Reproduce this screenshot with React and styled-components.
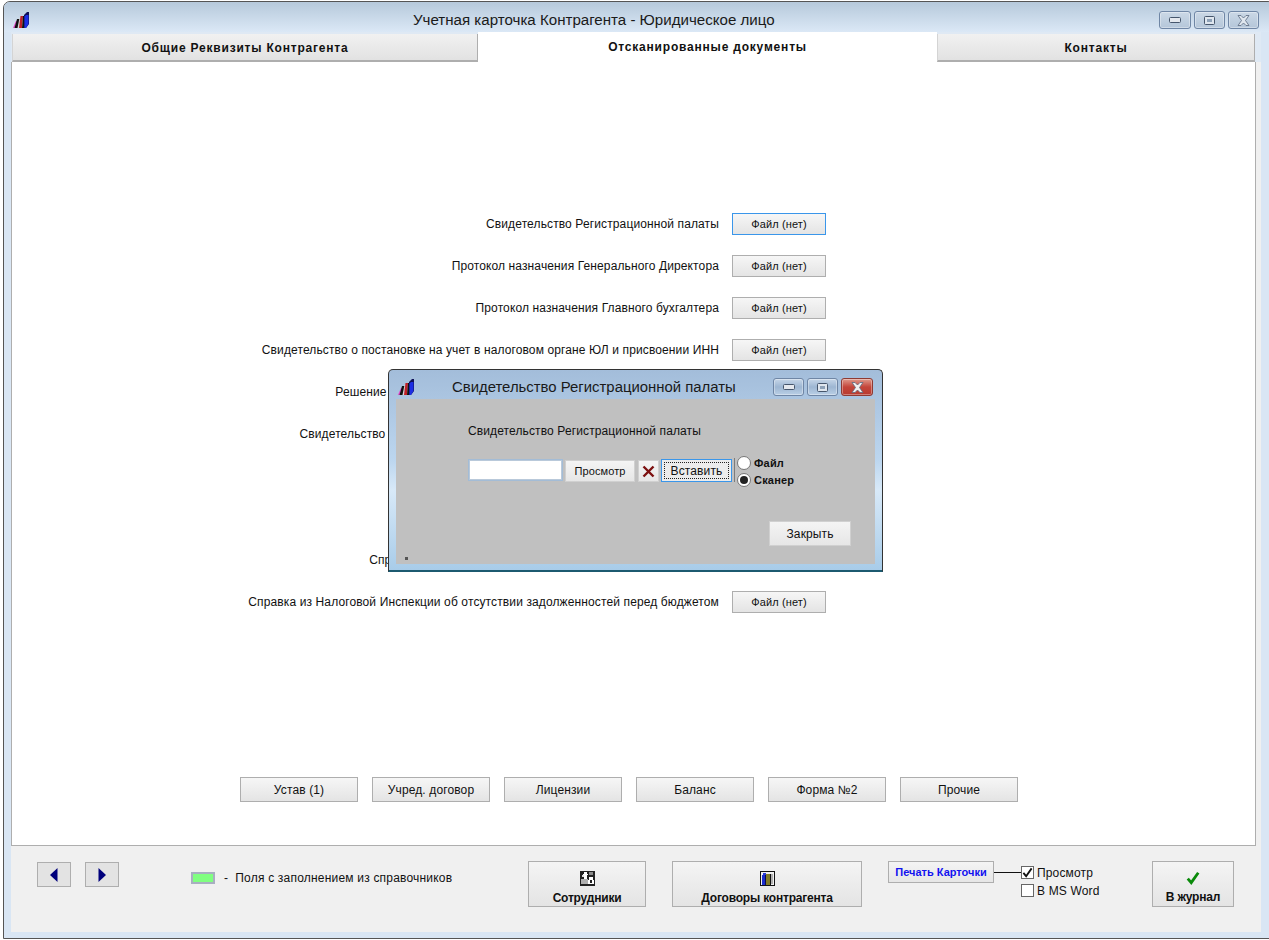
import React from "react";
import styled, { createGlobalStyle } from "styled-components";

const GlobalStyle = createGlobalStyle`
  html, body {
    margin: 0;
    padding: 0;
    background: #fff;
    font-family: "Liberation Sans", Arial, sans-serif;
    color: #111;
  }
`;

const rows = [
  "Свидетельство Регистрационной палаты",
  "Протокол назначения Генерального Директора",
  "Протокол назначения Главного бухгалтера",
  "Свидетельство о постановке на учет в налоговом органе ЮЛ и присвоении ИНН",
  "Решение о создании юридического лица и о назначении директора",
  "Свидетельство о внесении записи в Единый государственный реестр ЮЛ",
  "Выписка из Единого государственного реестра",
  "Информационное письмо органов статистики",
  "Справка из банка об открытии расчетного счета, об оборотах",
  "Справка из Налоговой Инспекции об отсутствии задолженностей перед бюджетом",
];

const extraDocs = ["Устав (1)", "Учред. договор", "Лицензии", "Баланс", "Форма №2", "Прочие"];

const Screen = styled.div`
  position: relative;
  width: 1269px;
  height: 940px;
  overflow: hidden;
  padding: 1px 0 0 3px;
  box-sizing: border-box;
`;

const Win = styled.div`
  width: 1272px;
  height: 938px;
  box-sizing: border-box;
  display: flex;
  flex-direction: column;
  border: 1px solid #555;
  border-radius: 7px 7px 0 0;
  background: #d9e6f4;
`;

const TitleBar = styled.div`
  height: ${(p) => p.$h}px;
  flex: none;
  display: flex;
  align-items: center;
  box-sizing: border-box;
  padding: ${(p) => p.$pad};
  border-radius: 6px 6px 0 0;
  background: ${(p) => p.$bg};
`;

const TitleText = styled.div`
  flex: none;
  margin-left: ${(p) => p.$left}px;
  font-size: ${(p) => p.$size}px;
  line-height: 18px;
  color: #1a1a1a;
  white-space: nowrap;
`;

const Controls = styled.div`
  margin-left: auto;
  display: flex;
  gap: 3px;
`;

const Ctl = styled.div`
  width: ${(p) => p.$w}px;
  height: 18px;
  box-sizing: border-box;
  display: flex;
  align-items: center;
  justify-content: center;
  border: 1px solid ${(p) => (p.$close ? "#8e3a33" : "#6f86a5")};
  border-radius: 3px;
  box-shadow: inset 0 0 0 1px rgba(255, 255, 255, 0.35);
  background: ${(p) => p.$bg};
`;

const Client = styled.div`
  flex: 1;
  min-height: 0;
  margin: 0 13px 6px 7px;
  display: flex;
  flex-direction: column;
  background: #f0f0f0;
`;

const Tabs = styled.div`
  height: 30px;
  flex: none;
  display: flex;
  align-items: flex-end;
  padding-left: 1px;
  padding-right: 5px;
  background: #dfe9f4;
`;

const Tab = styled.div`
  width: ${(p) => p.$w}px;
  height: ${(p) => (p.$active ? 30 : 28)}px;
  box-sizing: border-box;
  display: flex;
  align-items: center;
  justify-content: center;
  padding: ${(p) => (p.$active ? "0 0 1px" : "2px 0 0")};
  font-size: 12px;
  font-weight: bold;
  letter-spacing: 0.8px;
  color: #111;
  background: ${(p) => (p.$active ? "#fff" : "linear-gradient(#f1f1f1, #e2e2e2)")};
  border-bottom: ${(p) => (p.$active ? "none" : "2px solid #aeaeae")};
  border-right: ${(p) => (p.$active ? "none" : "1px solid #aeaeae")};
  border-left: ${(p) => (p.$active ? "none" : "1px solid #d4d4d4")};
`;

const Page = styled.div`
  flex: 1;
  min-height: 0;
  margin: 0 5px 0 0;
  display: flex;
  flex-direction: column;
  background: #fff;
  border: 1px solid #aeaeae;
  border-top: none;
`;

const DocList = styled.div`
  display: flex;
  flex-direction: column;
  gap: 20px;
  padding: 151px 429px 0 0;
`;

const DocRow = styled.div`
  display: flex;
  justify-content: flex-end;
  align-items: center;
  gap: 13px;
  height: 22px;
  font-size: 12px;
  letter-spacing: 0.12px;
`;

const FlatButton = styled.button`
  width: ${(p) => p.$w}px;
  height: ${(p) => p.$h}px;
  flex: none;
  box-sizing: border-box;
  padding: 0;
  font-family: inherit;
  font-size: ${(p) => p.$size || 12}px;
  letter-spacing: 0.12px;
  color: #111;
  border: ${(p) => (p.$focus ? "1px solid #3a96ea" : "1px solid #aeaeae")};
  background: linear-gradient(#f6f6f6, #e4e4e4);
`;

const ExtraRow = styled.div`
  margin-top: auto;
  display: flex;
  gap: 14px;
  padding: 0 0 43px 228px;
`;

const Footer = styled.div`
  height: 86px;
  flex: none;
  display: flex;
  align-items: flex-start;
  padding: 15px 0 0 26px;
  box-sizing: border-box;
`;

const ArrowButton = styled.div`
  width: 34px;
  height: 25px;
  margin: 1px 14px 0 0;
  box-sizing: border-box;
  display: flex;
  align-items: center;
  justify-content: center;
  border: 1px solid #aeaeae;
  background: #e3e3e3;
`;

const Legend = styled.div`
  display: flex;
  align-items: center;
  width: 337px;
  height: 12px;
  margin: 11px 0 0 58px;
  font-size: 12px;
  letter-spacing: 0.2px;
  white-space: pre;
`;

const Swatch = styled.span`
  width: 24px;
  height: 12px;
  box-sizing: border-box;
  margin-right: 9px;
  border: 2px solid #a8afc0;
  background: #80ff80;
`;

const BigButton = styled.div`
  width: ${(p) => p.$w}px;
  height: 46px;
  flex: none;
  margin-right: ${(p) => p.$right}px;
  box-sizing: border-box;
  display: flex;
  flex-direction: column;
  align-items: center;
  padding-top: 9px;
  font-size: 12px;
  font-weight: bold;
  letter-spacing: -0.2px;
  line-height: 14px;
  gap: 5px;
  border: 1px solid #aeaeae;
  background: linear-gradient(#f4f4f4, #e4e4e4);
`;

const PrintButton = styled.div`
  width: 106px;
  height: 22px;
  flex: none;
  box-sizing: border-box;
  display: flex;
  align-items: center;
  justify-content: center;
  font-size: 11px;
  font-weight: bold;
  color: #1212f0;
  border: 1px solid #aeaeae;
  background: linear-gradient(#f4f4f4, #e6e6e6);
`;

const Connector = styled.div`
  width: 27px;
  height: 1px;
  margin-top: 11px;
  flex: none;
  background: #111;
`;

const PrintOptions = styled.div`
  width: 131px;
  flex: none;
  display: flex;
  flex-direction: column;
  gap: 5px;
  padding-top: 5px;
`;

const CheckRow = styled.div`
  display: flex;
  align-items: center;
  gap: 3px;
  height: 13px;
  font-size: 12px;
  letter-spacing: 0.15px;
  white-space: nowrap;
`;

const CheckBox = styled.span`
  width: 13px;
  height: 13px;
  flex: none;
  box-sizing: border-box;
  display: flex;
  align-items: center;
  justify-content: center;
  border: 1px solid #666;
  background: #fff;
`;

const Modal = styled.div`
  position: absolute;
  left: 388px;
  top: 369px;
  width: 495px;
  height: 203px;
  box-sizing: border-box;
  display: flex;
  flex-direction: column;
  border: 1px solid #333;
  border-bottom: 2px solid #1c5a70;
  border-radius: 5px 5px 0 0;
  background: linear-gradient(#a3bdda, #bcd6ef 45%, #d8e9f8 60%, #a8cce9);
`;

const ModalBody = styled.div`
  flex: 1;
  min-height: 0;
  margin: 0 7px 6px 7px;
  display: flex;
  flex-direction: column;
  box-sizing: border-box;
  padding: 25px 24px 0 9px;
  background: #c0c0c0;
  font-size: 12px;
  letter-spacing: 0.12px;
`;

const ModalCaption = styled.div`
  margin-left: 63px;
  line-height: 14px;
`;

const ModalForm = styled.div`
  display: flex;
  align-items: flex-start;
  margin: 20px 0 0 63px;
  height: 31px;
`;

const PathInput = styled.input`
  width: 95px;
  height: 22px;
  box-sizing: border-box;
  margin: 1px 2px 0 0;
  border: 1px solid #a3bcd6;
  outline: 1px solid #b9c9da;
  outline-offset: -2px;
  background: #fff;
`;

const ModalButton = styled.div`
  width: ${(p) => p.$w}px;
  height: ${(p) => p.$h || 22}px;
  margin: ${(p) => p.$m || "2px 3px 0 0"};
  flex: none;
  box-sizing: border-box;
  display: flex;
  align-items: center;
  justify-content: center;
  font-size: ${(p) => p.$size}px;
  color: #111;
  border: 1px solid #d0d0d0;
  background: linear-gradient(#f4f4f4, #e6e6e6);
`;

const InsertButton = styled.div`
  width: 71px;
  height: 23px;
  margin: 1px 2px 0 0;
  flex: none;
  box-sizing: border-box;
  padding: 2px;
  border: 1px solid #3a96ea;
  background: #ececec;
`;

const InsertLabel = styled.div`
  height: 100%;
  box-sizing: border-box;
  display: flex;
  align-items: center;
  justify-content: center;
  border: 1px dotted #222;
  font-size: 12px;
`;

const Divider = styled.div`
  width: 1px;
  height: 24px;
  flex: none;
  margin-right: 2px;
  background: #7c7c7c;
`;

const RadioGroup = styled.div`
  display: flex;
  flex-direction: column;
  gap: 3px;
  margin-top: -2px;
`;

const RadioRow = styled.div`
  display: flex;
  align-items: center;
  gap: 3px;
  height: 14px;
  font-size: 11px;
  font-weight: bold;
  letter-spacing: 0.2px;
`;

const Radio = styled.span`
  width: 14px;
  height: 14px;
  box-sizing: border-box;
  flex: none;
  display: flex;
  align-items: center;
  justify-content: center;
  border: 1px solid #777;
  border-radius: 50%;
  background: #fff;
  &::after {
    content: "";
    display: ${(p) => (p.$on ? "block" : "none")};
    width: 8px;
    height: 8px;
    border-radius: 50%;
    background: #222;
  }
`;

const ModalBottom = styled.div`
  margin-top: auto;
  display: flex;
  align-items: flex-end;
  justify-content: space-between;
  padding-bottom: 4px;
`;

const Dot = styled.span`
  width: 3px;
  height: 3px;
  background: #555;
`;

const BooksIcon = () => (
  <svg width="16" height="16" viewBox="0 0 16 16" style={{ flex: "none" }}>
    <path d="M0 16 L3 9 H4 L1.5 16Z" fill="#e83cc8" />
    <path d="M1.5 16 L4 7 H7 L5 16Z" fill="#111" />
    <path d="M4.5 16 L6.5 6 H7.5 L6 16Z" fill="#d8d8d8" />
    <path d="M6 16 L7.5 4 H10 L9 16Z" fill="#c02028" />
    <path d="M9 16 L10 4 H11 V16Z" fill="#111" />
    <path d="M11 16 V3 L14 0 H16 V12 L13 16Z" fill="#101058" />
    <path d="M11.5 16 V4.5 L13 3 H15.5 V12 L13 16Z" fill="#1c2ee4" />
  </svg>
);

const MinGlyph = () => (
  <svg width="12" height="6" viewBox="0 0 12 6">
    <rect x="0.5" y="0.5" width="11" height="5" rx="1" fill="#e4e8ee" stroke="#46566c" />
  </svg>
);

const MaxGlyph = () => (
  <svg width="11" height="9" viewBox="0 0 11 9">
    <rect x="0.5" y="0.5" width="10" height="8" rx="1" fill="#dfe6ee" stroke="#46566c" />
    <rect x="3" y="3" width="5" height="3" fill="#8ea2b8" />
  </svg>
);

const CloseGlyph = ({ fill }) => (
  <svg width="15" height="11" viewBox="0 0 15 11">
    <path
      d="M2 0.5 H5 L7.5 3 L10 0.5 H13 L9.5 5.5 L13 10.5 H10 L7.5 8 L5 10.5 H2 L5.5 5.5Z"
      fill={fill}
      stroke="#5a6a80"
      strokeWidth="0.8"
    />
  </svg>
);

const Triangle = ({ dir }) => (
  <svg width="8" height="14" viewBox="0 0 8 14">
    <path d={dir === "left" ? "M7.5 0 V14 L0 7Z" : "M0.5 0 V14 L8 7Z"} fill="#00007c" />
  </svg>
);

const PeopleIcon = () => (
  <svg width="15" height="15" viewBox="0 0 15 15" shapeRendering="crispEdges" style={{ flex: "none" }}>
    <rect width="15" height="15" fill="#222" />
    <rect x="1" y="8" width="7" height="5" fill="#b0b0b0" />
    <rect x="4" y="1" width="3" height="7" fill="#fff" />
    <rect x="3" y="3" width="5" height="1" fill="#fff" />
    <rect x="2" y="4" width="2" height="2" fill="#e0e0e0" />
    <rect x="9" y="1" width="4" height="3" fill="#8a8a8a" />
    <rect x="9" y="6" width="4" height="3" fill="#fff" />
    <rect x="8" y="9" width="6" height="4" fill="#fff" />
    <rect x="10" y="9" width="2" height="3" fill="#222" />
  </svg>
);

const BinderIcon = () => (
  <svg width="15" height="15" viewBox="0 0 15 15" shapeRendering="crispEdges" style={{ flex: "none" }}>
    <rect width="15" height="15" fill="#111" />
    <rect x="1" y="1" width="13" height="13" fill="#f0f0f0" />
    <rect x="2" y="4" width="3" height="10" fill="#1c2ecc" />
    <rect x="3" y="2" width="3" height="2" fill="#2a3ad8" />
    <rect x="5" y="4" width="1" height="10" fill="#0a0a50" />
    <rect x="6" y="3" width="4" height="11" fill="#827c26" />
    <rect x="10" y="3" width="1" height="11" fill="#111" />
    <rect x="11" y="3" width="2" height="10" fill="#b0b0b0" />
  </svg>
);

const CheckMark = ({ size, color, width }) => (
  <svg width={size} height={size} viewBox="0 0 12 12" style={{ flex: "none" }}>
    <path d="M1.5 6.5 L4.5 10 L10.5 1.5" fill="none" stroke={color} strokeWidth={width} />
  </svg>
);

const App = () => (
  <Screen>
    <GlobalStyle />
    <Win>
      <TitleBar $h={30} $pad="6px 15px 0 9px" $bg="linear-gradient(#b6c9db, #dbe8f6)">
        <BooksIcon />
        <TitleText $left={384} $size={15.1}>Учетная карточка Контрагента - Юридическое лицо</TitleText>
        <Controls>
          <Ctl $w={32} $bg="linear-gradient(#cbd8e6, #b4c6d9)"><MinGlyph /></Ctl>
          <Ctl $w={31} $bg="linear-gradient(#cbd8e6, #b4c6d9)"><MaxGlyph /></Ctl>
          <Ctl $w={31} $bg="linear-gradient(#cbd8e6, #b4c6d9)"><CloseGlyph fill="#dfe6ee" /></Ctl>
        </Controls>
      </TitleBar>
      <Client>
        <Tabs>
          <Tab $w={466}>Общие Реквизиты Контрагента</Tab>
          <Tab $w={459} $active>Отсканированные документы</Tab>
          <Tab $w={318}>Контакты</Tab>
        </Tabs>
        <Page>
          <DocList>
            {rows.map((label, i) => (
              <DocRow key={label}>
                <span>{label}</span>
                <FlatButton $w={94} $h={22} $size={11} $focus={i === 0}>Файл (нет)</FlatButton>
              </DocRow>
            ))}
          </DocList>
          <ExtraRow>
            {extraDocs.map((label) => (
              <FlatButton key={label} $w={118} $h={25}>{label}</FlatButton>
            ))}
          </ExtraRow>
        </Page>
        <Footer>
          <ArrowButton><Triangle dir="left" /></ArrowButton>
          <ArrowButton><Triangle dir="right" /></ArrowButton>
          <Legend>
            <Swatch />
            {"-  Поля с заполнением из справочников"}
          </Legend>
          <BigButton $w={118} $right={26}>
            <PeopleIcon />
            Сотрудники
          </BigButton>
          <BigButton $w={190} $right={26}>
            <BinderIcon />
            Договоры контрагента
          </BigButton>
          <PrintButton>Печать Карточки</PrintButton>
          <Connector />
          <PrintOptions>
            <CheckRow>
              <CheckBox><CheckMark size={11} color="#111" width={2} /></CheckBox>
              Просмотр
            </CheckRow>
            <CheckRow>
              <CheckBox />
              В MS Word
            </CheckRow>
          </PrintOptions>
          <BigButton $w={82} $right={0}>
            <CheckMark size={14} color="#0a8a0a" width={2.4} />
            В журнал
          </BigButton>
        </Footer>
      </Client>
    </Win>

    <Modal>
      <TitleBar $h={29} $pad="5px 9px 0 9px" $bg="transparent">
        <BooksIcon />
        <TitleText $left={38} $size={14.9}>Свидетельство Регистрационной палаты</TitleText>
        <Controls>
          <Ctl $w={31} $bg="linear-gradient(#c6d6e8, #9db6d2 50%, #b9cfe6)"><MinGlyph /></Ctl>
          <Ctl $w={31} $bg="linear-gradient(#c6d6e8, #9db6d2 50%, #b9cfe6)"><MaxGlyph /></Ctl>
          <Ctl $w={32} $close $bg="linear-gradient(#e09a8c, #c4453a 50%, #b83a30)"><CloseGlyph fill="#f2eeee" /></Ctl>
        </Controls>
      </TitleBar>
      <ModalBody>
        <ModalCaption>Свидетельство Регистрационной палаты</ModalCaption>
        <ModalForm>
          <PathInput />
          <ModalButton $w={70} $size={11}>Просмотр</ModalButton>
          <ModalButton $w={21} $m="2px 2px 0 0" $size={11}>
            <svg width="13" height="13" viewBox="0 0 13 13">
              <path d="M1.5 1.5 L11.5 11.5 M11.5 1.5 L1.5 11.5" stroke="#7c1010" strokeWidth="2.4" />
            </svg>
          </ModalButton>
          <InsertButton><InsertLabel>Вставить</InsertLabel></InsertButton>
          <Divider />
          <RadioGroup>
            <RadioRow><Radio />Файл</RadioRow>
            <RadioRow><Radio $on />Сканер</RadioRow>
          </RadioGroup>
        </ModalForm>
        <ModalBottom>
          <Dot />
          <ModalButton $w={82} $h={25} $size={12} $m="0 0 14px 0">Закрыть</ModalButton>
        </ModalBottom>
      </ModalBody>
    </Modal>
  </Screen>
);

export default App;
